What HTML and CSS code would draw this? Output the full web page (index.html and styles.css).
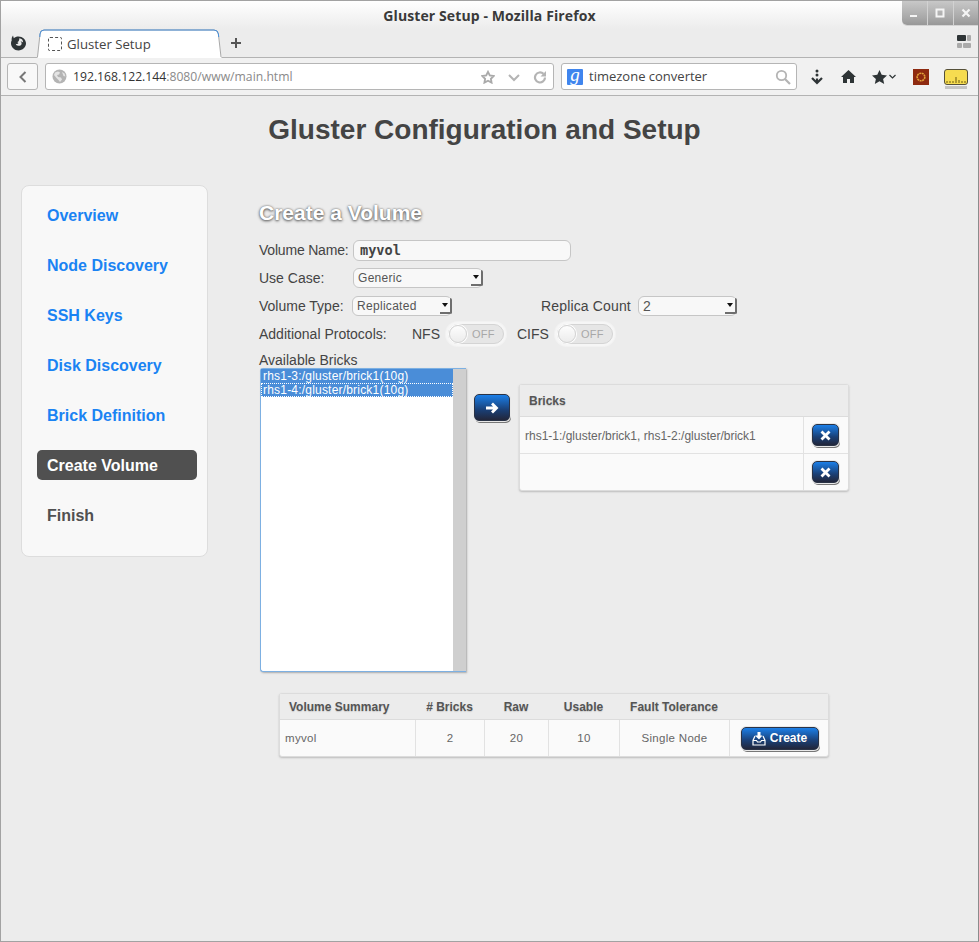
FILE: index.html
```html
<!DOCTYPE html>
<html lang="en">

<head>
    <meta charset="UTF-8">
    <meta name="viewport" content="width=device-width, initial-scale=1.0">
    <title>Gluster Setup</title>
    <link rel="stylesheet" href="styles.css">
</head>

<body>
    <div class="window">
        <!-- browser chrome -->
        <header class="titlebar">
            <span class="title-text">Gluster Setup - Mozilla Firefox</span>
            <div class="win-buttons">
                <span class="win-btn"><svg width="10" height="10" viewBox="0 0 10 10"><rect x="1" y="7" width="7" height="2" fill="#f4f4f4"/></svg></span>
                <span class="win-btn"><svg width="10" height="10" viewBox="0 0 10 10"><rect x="1.5" y="1.5" width="7" height="7" fill="none" stroke="#f4f4f4" stroke-width="2"/></svg></span>
                <span class="win-btn"><svg width="10" height="10" viewBox="0 0 10 10"><path d="M1.5 1.5l7 7M8.500 1.500l-7 7" stroke="#f4f4f4" stroke-width="2.200"/></svg></span>
            </div>
        </header>
        <div class="tabbar">
            <svg class="ff-logo" width="17" height="16" viewBox="0 0 17 16"><path d="M3 .5L3.800 3.200C5 2.100 6.500 1.500 8.500 1.500c4.100 0 7.500 3 7.500 6.800S12.600 15.500 8.500 15.500 1 12.300 1 8.300c0-1.100.2-2 .7-2.900-.3-1.800.2-3.400 1.300-4.900z" fill="#2e3436"/><path d="M9.300 3.200c2.400.1 4 2 3.800 4.300-.7-.9-1.700-1.200-2.700-1 1.100.5 1.500 1.600 1.100 2.700-.5 1.200-1.900 1.900-3.300 1.600-1.200-.2-2.100-1-2.500-2.100 1 .6 2.300.3 2.800-.6-.6-.2-1-.5-1.200-1 1.300-.4 2.200-2 2-3.900z" fill="#ececec"/></svg>
            <div class="tab">
                <svg class="tab-shape" width="185" height="29" viewBox="0 0 185 29"><path d="M0.500 29L3 5Q3.300 1 7 1H177Q181 1 181.400 5L184.500 29" fill="#fff"/><path d="M0.500 28L3 5Q3.300 1 7 1H177Q181 1 181.400 5L184 28" fill="none" stroke="#a9a9a9"/><path d="M2.800 8L3 5Q3.300 1 7 1H177Q181 1 181.400 5L181.700 8" fill="none" stroke="#4a90d9"/></svg>
                <span class="tab-fav"></span>
                <span class="tab-text">Gluster Setup</span>
            </div>
            <svg class="tab-new" width="12" height="12" viewBox="0 0 12 12"><path d="M6 1v10M1 6h10" stroke="#555" stroke-width="2"/></svg>
            <svg class="tab-grid" width="14" height="14" viewBox="0 0 14 14"><rect width="9" height="6" rx="1" fill="#2e3436"/><rect x="10" width="4" height="6" rx="1" fill="#aaa"/><rect y="8" width="5" height="5" rx="1" fill="#aaa"/><rect x="6" y="8" width="8" height="5" rx="1" fill="#aaa"/></svg>
        </div>
        <nav class="navbar">
            <span class="back-btn"><svg width="10" height="12" viewBox="0 0 10 12"><path d="M7.500 1L2.500 6l5 5" fill="none" stroke="#777" stroke-width="2"/></svg></span>
            <div class="urlbar">
                <svg class="globe" width="15" height="15" viewBox="0 0 15 15"><circle cx="7.500" cy="7.500" r="7" fill="#b4b4b4"/><path d="M3 3.500l3-1 2 1-1 2-2 .5 1 2 3 .5 1 2-2 2.500-1.500-2-2-2L2 6zM10 3l2.500 1.500 1 3-2-.5z" fill="#e4e4e4"/></svg>
                <span class="url-text"><b>192.168.122.144</b>:8080/www/main.html</span>
                <svg class="url-icon" width="14" height="14" viewBox="0 0 15 14"><path d="M7.500 1.500l1.900 3.800 4.200.6-3 3 .7 4.100-3.800-2-3.800 2 .7-4.100-3-3 4.200-.6z" fill="none" stroke="#aaa" stroke-width="2"/></svg>
                <svg class="url-icon" width="14" height="14" viewBox="0 0 14 14"><path d="M2 5l5 5 5-5" fill="none" stroke="#b4b4b4" stroke-width="2"/></svg>
                <svg class="url-icon" width="14" height="14" viewBox="0 0 14 14"><path d="M12 7.500a5 5 0 1 1-1.500-3.600" fill="none" stroke="#b4b4b4" stroke-width="2.200"/><path d="M13 1v5.500H7.500z" fill="#b4b4b4"/></svg>
            </div>
            <div class="searchbar">
                <span class="g-icon">g</span>
                <span class="search-text">timezone converter</span>
                <svg width="16" height="16" viewBox="0 0 16 16"><circle cx="6.500" cy="6.500" r="4.700" fill="none" stroke="#b4b4b4" stroke-width="1.800"/><path d="M10 10l5 5" stroke="#b4b4b4" stroke-width="2.200"/></svg>
            </div>
            <div class="nav-icons">
                <svg width="14" height="16" viewBox="0 0 14 16"><circle cx="7" cy="2" r="1.500" fill="#2e3436"/><circle cx="7" cy="6" r="1.500" fill="#2e3436"/><path d="M7 9.500v4M2 9l5 5 5-5" fill="none" stroke="#2e3436" stroke-width="2.200"/></svg>
                <svg width="15" height="13" viewBox="0 0 15 13"><path d="M7.500 0L15 7h-2v6H9V9H6v4H2V7H0z" fill="#2e3436"/></svg>
                <span class="star-menu">
                    <svg width="15" height="14" viewBox="0 0 15 14"><path d="M7.500 0l2.200 4.800 5.300.6-3.900 3.500 1.100 5.100-4.700-2.700L2.800 14l1.100-5.100L0 5.400l5.300-.6z" fill="#2e3436"/></svg>
                    <svg width="7" height="5" viewBox="0 0 7 5"><path d="M.5 1l3 3 3-3" fill="none" stroke="#2e3436" stroke-width="1.200"/></svg>
                </span>
                <svg width="16" height="16" viewBox="0 0 16 16"><rect width="16" height="16" fill="#8e2a10"/><circle cx="8" cy="8" r="3.800" fill="none" stroke="#e2a23a" stroke-width="1.600" stroke-dasharray="2 .6"/></svg>
                <svg class="meter" width="24" height="20" viewBox="0 0 24 20"><rect x=".5" y=".5" width="23" height="15" rx="2.500" fill="#f6dc50" stroke="#55503a"/><path d="M3 14v-2M6 14v-2M9 14v-2M12 14V8M15 14v-3M18 14v-2M21 14v-2" stroke="#6b5a10"/><rect x="1" y="17" width="22" height="3" fill="#c4c4c4"/></svg>
            </div>
        </nav>

        <!-- page -->
        <main class="page">
            <h1 class="page-title">Gluster Configuration and Setup</h1>
            <div class="columns">
                <ul class="steps">
                    <li><a>Overview</a></li>
                    <li><a>Node Discovery</a></li>
                    <li><a>SSH Keys</a></li>
                    <li><a>Disk Discovery</a></li>
                    <li><a>Brick Definition</a></li>
                    <li class="active"><a>Create Volume</a></li>
                    <li class="todo"><a>Finish</a></li>
                </ul>
                <section class="form">
                    <h2 class="form-title">Create a Volume</h2>
                    <div class="row row-name">
                        <label class="lbl lbl-name">Volume Name:</label>
                        <input class="text-input" type="text" value="myvol">
                    </div>
                    <div class="row row-case">
                        <label class="lbl lbl-case">Use Case:</label>
                        <span class="pick pick-case"><select><option>Generic</option></select><i class="pick-arrow"></i></span>
                    </div>
                    <div class="row row-type">
                        <label class="lbl lbl-type">Volume Type:</label>
                        <span class="pick pick-type"><select><option>Replicated</option></select><i class="pick-arrow"></i></span>
                        <label class="lbl lbl-replica">Replica Count</label>
                        <span class="pick pick-replica"><select><option>2</option></select><i class="pick-arrow"></i></span>
                    </div>
                    <div class="row row-proto">
                        <label class="lbl lbl-proto">Additional Protocols:</label>
                        <label class="lbl lbl-nfs">NFS</label>
                        <span class="toggle"><span class="track"><i class="knob"></i>OFF</span></span>
                        <label class="lbl lbl-cifs">CIFS</label>
                        <span class="toggle"><span class="track"><i class="knob"></i>OFF</span></span>
                    </div>
                    <label class="lbl lbl-avail">Available Bricks</label>
                    <div class="bricks-row">
                        <div class="brick-list">
                            <ul class="brick-items">
                                <li>rhs1-3:/gluster/brick1(10g)</li>
                                <li class="focused">rhs1-4:/gluster/brick1(10g)</li>
                            </ul>
                            <div class="scroll-col"></div>
                        </div>
                        <button class="btn btn-arrow"><svg width="14" height="14" viewBox="0 0 14 14"><path d="M1 7h10M7 2.500L11.500 7 7 11.500" fill="none" stroke="#fff" stroke-width="2.800"/></svg></button>
                        <table class="grid bricks-table">
                            <colgroup>
                                <col>
                                <col class="col-action">
                            </colgroup>
                            <thead>
                                <tr><th colspan="2">Bricks</th></tr>
                            </thead>
                            <tbody>
                                <tr>
                                    <td>rhs1-1:/gluster/brick1, rhs1-2:/gluster/brick1</td>
                                    <td class="action"><button class="btn btn-x"><svg width="11" height="11" viewBox="0 0 11 11"><path d="M1.500 1.500l8 8M9.500 1.500l-8 8" stroke="#fff" stroke-width="2.800"/></svg></button></td>
                                </tr>
                                <tr>
                                    <td></td>
                                    <td class="action"><button class="btn btn-x"><svg width="11" height="11" viewBox="0 0 11 11"><path d="M1.500 1.500l8 8M9.500 1.500l-8 8" stroke="#fff" stroke-width="2.800"/></svg></button></td>
                                </tr>
                            </tbody>
                        </table>
                    </div>
                    <table class="grid summary-table">
                        <thead>
                            <tr>
                                <th class="c-name">Volume Summary</th>
                                <th class="c-bricks">#&nbsp;Bricks</th>
                                <th class="c-raw">Raw</th>
                                <th class="c-usable">Usable</th>
                                <th class="c-fault">Fault Tolerance</th>
                                <th class="c-act"></th>
                            </tr>
                        </thead>
                        <tbody>
                            <tr>
                                <td>myvol</td>
                                <td>2</td>
                                <td>20</td>
                                <td>10</td>
                                <td>Single Node</td>
                                <td class="create-cell"><button class="btn btn-create"><svg width="14" height="15" viewBox="0 0 14 15"><path d="M5.500 1h3v3.500h2L7 8.500 3 4.500h2.500z" fill="#fff"/><path d="M3 5L1 9.500V14h12V9.500L11 5M1 9.500h3.500l1 1.500h3l1-1.500H13" fill="none" stroke="#fff" stroke-width="1.200"/></svg>Create</button></td>
                            </tr>
                        </tbody>
                    </table>
                </section>
            </div>
        </main>
    </div>
</body>

</html>
```

FILE: styles.css
```css
* {
    box-sizing: border-box;
}

body {
    margin: 0;
    background: #ececec;
    font-family: "Liberation Sans", Arial, sans-serif;
    color: #444;
}

.window {
    height: 942px;
    border: 1px solid #a2a2a2;
    border-right-color: #8c8c8c;
    display: flex;
    flex-direction: column;
    background: #ececec;
    overflow: hidden;
}

/* title bar */
.titlebar {
    height: 28px;
    flex: none;
    position: relative;
    display: flex;
    align-items: center;
    justify-content: center;
    background: linear-gradient(#fff, #ececec);
}

.title-text {
    font-family: "Open Sans", sans-serif;
    font-size: 14px;
    font-weight: 700;
    letter-spacing: .1px;
    color: #3a3a3a;
}

.win-buttons {
    position: absolute;
    top: 0;
    right: 0;
    display: flex;
    height: 24px;
    border-radius: 0 0 0 5px;
    overflow: hidden;
    background: linear-gradient(#c8c8c8, #a8a8a8 70%, #989898);
    box-shadow: 0 1px 0 #d4d4d4;
}

.win-btn {
    width: 25.500px;
    display: flex;
    align-items: center;
    justify-content: center;
    border-left: 1px solid #d2d2d2;
}

.win-btn:first-child {
    border-left: 0;
}

/* tab strip */
.tabbar {
    height: 29px;
    flex: none;
    display: flex;
    align-items: flex-end;
    background: #ececec;
    border-bottom: 1px solid #b3b3b3;
    padding-left: 9px;
    position: relative;
}

.ff-logo {
    margin-bottom: 6px;
}

.tab {
    width: 185px;
    height: 29px;
    position: relative;
    margin-left: 10px;
    margin-bottom: -1px;
    display: flex;
    align-items: center;
    padding: 1px 0 0 11px;
}

.tab-shape {
    position: absolute;
    left: 0;
    top: 0;
}

.tab-fav {
    position: relative;
    width: 14px;
    height: 14px;
    border: 1px dashed #555;
    border-radius: 2px;
}

.tab-text {
    position: relative;
    margin-left: 5px;
    font-family: "Open Sans", sans-serif;
    font-size: 13.200px;
    color: #444;
}

.tab-new {
    margin: 0 0 8px 8px;
}

.tab-grid {
    margin: 0 7px 8px auto;
}

/* nav bar */
.navbar {
    height: 38px;
    flex: none;
    display: flex;
    align-items: center;
    background: #f1f1f1;
    border-bottom: 1px solid #b3b3b3;
    padding: 0 0 0 6px;
}

.back-btn {
    width: 31px;
    height: 27px;
    flex: none;
    display: flex;
    align-items: center;
    justify-content: center;
    background: #f8f8f8;
    border: 1px solid #b5b5b5;
    border-radius: 3px;
}

.urlbar {
    width: 509px;
    height: 27px;
    flex: none;
    margin-left: 7px;
    display: flex;
    align-items: center;
    background: #fff;
    border: 1px solid #b5b5b5;
    border-radius: 3px;
    padding: 0 6px 0 6px;
}

.url-text {
    flex: 1;
    margin-left: 6px;
    font-family: "Open Sans", sans-serif;
    font-size: 12.200px;
    color: #8a8a8a;
}

.url-text b {
    font-weight: 400;
    color: #333;
}

.url-icon {
    margin-left: 12px;
}

.searchbar {
    width: 236px;
    height: 27px;
    flex: none;
    margin-left: 7px;
    display: flex;
    align-items: center;
    background: #fff;
    border: 1px solid #b5b5b5;
    border-radius: 3px;
    padding: 0 5px 0 5px;
}

.g-icon {
    width: 16px;
    height: 16px;
    flex: none;
    background: #3f85ee;
    color: #fff;
    border-radius: 1px;
    font-family: "Liberation Serif", serif;
    font-size: 19px;
    font-style: italic;
    line-height: 12px;
    text-align: center;
}

.search-text {
    flex: 1;
    margin: 0 0 1px 6px;
    font-family: "Open Sans", sans-serif;
    font-size: 13px;
    color: #444;
}

.nav-icons {
    flex: 1;
    display: flex;
    align-items: center;
    padding-left: 13px;
}

.nav-icons > svg:nth-child(2) {
    margin-left: 17px;
}

.star-menu {
    display: flex;
    align-items: center;
    gap: 2px;
    margin-left: 16px;
}

.nav-icons > svg:nth-child(4) {
    margin-left: 17px;
}

.nav-icons > svg:nth-child(5) {
    margin-left: 15px;
    margin-top: 4px;
}

/* page */
.page {
    flex: 1;
    padding: 0 10px 0 20px;
}

.page-title {
    margin: 16px 0 0;
    height: 36px;
    line-height: 36px;
    font-size: 28px;
    font-weight: 700;
    text-align: center;
    color: #444;
    padding-right: 20px;
}

.columns {
    display: flex;
    margin-top: 37px;
}

/* side menu */
.steps {
    width: 187px;
    height: 372px;
    flex: none;
    margin: 0;
    padding: 14px 10px 0 15px;
    list-style: none;
    background: #f8f8f8;
    border: 1px solid #ddd;
    border-radius: 8px;
}

.steps li {
    height: 30px;
    margin-bottom: 20px;
    padding-left: 10px;
    border-radius: 5px;
    line-height: 31px;
    font-size: 16px;
    font-weight: 700;
    color: #1a83f3;
}

.steps li.active {
    background: #505050;
    color: #fff;
}

.steps li.todo {
    color: #505050;
}

/* form */
.form {
    margin-left: 51px;
    flex: 1;
    font-size: 14px;
}

.form-title {
    margin: 15px 0 0;
    height: 26px;
    line-height: 26px;
    font-size: 21px;
    font-weight: 700;
    color: #fff;
    text-shadow: 0 1px 3px #555, 0 0 2px #777;
}

.row {
    display: flex;
    align-items: center;
}

.row-name {
    height: 22px;
    margin-top: 13px;
}

.row-case {
    height: 20px;
    margin-top: 7px;
}

.row-type {
    height: 20px;
    margin-top: 8px;
}

.row-proto {
    height: 24px;
    margin-top: 6px;
}

.lbl {
    color: #444;
    white-space: nowrap;
}

.lbl-name,
.lbl-case {
    width: 94px;
}

.lbl-name {
    letter-spacing: -.2px;
}

.lbl-type {
    width: 93px;
}

.lbl-replica {
    width: 97px;
    margin-left: 89px;
    letter-spacing: .15px;
}

.lbl-proto {
    width: 153px;
}

.lbl-nfs {
    width: 34px;
}

.lbl-cifs {
    margin-left: 11px;
    width: 38px;
}

.lbl-avail {
    display: block;
    height: 16px;
    line-height: 16px;
    margin-top: 6px;
}

.text-input {
    width: 218px;
    height: 21px;
    padding: 0 6px;
    background: #f8f8f8;
    border: 1px solid #c6c6c6;
    border-radius: 6px;
    font-family: "DejaVu Sans Mono", monospace;
    font-size: 13.600px;
    font-weight: 700;
    color: #444;
}

.pick {
    position: relative;
    display: block;
    height: 20px;
}

.pick-case {
    width: 130px;
}

.pick-type {
    width: 100px;
}

.pick-replica {
    width: 99px;
}

.pick select {
    appearance: none;
    width: 100%;
    height: 100%;
    padding: 0 4px;
    background: #f8f8f8;
    border: 1px solid #c6c6c6;
    border-radius: 6px;
    font-family: "Liberation Sans", Arial, sans-serif;
    font-size: 12px;
    letter-spacing: .3px;
    color: #555;
}

.pick-replica select {
    font-size: 14px;
}

.pick-arrow {
    position: absolute;
    top: 2px;
    right: 0;
    width: 12px;
    height: 16px;
    background: #f8f8f8;
    border-right: 2px solid #6e6e6e;
    border-bottom: 2px solid #6e6e6e;
    border-radius: 0 2px 2px 0;
}

.pick-arrow::after {
    content: "";
    position: absolute;
    left: 2px;
    top: 5px;
    border: 3.500px solid transparent;
    border-top: 4px solid #111;
    border-bottom: 0;
}

.toggle {
    width: 60px;
    height: 24px;
    flex: none;
    padding: 2px;
    background: #f6f6f6;
    border-radius: 12px;
    box-shadow: 0 0 0 1px #f2f2f2;
}

.track {
    display: flex;
    align-items: center;
    height: 20px;
    border-radius: 10px;
    border: 1px solid #d4d4d4;
    background: #e6e6e6;
    font-size: 11px;
    letter-spacing: .2px;
    color: #a8a8a8;
}

.knob {
    width: 18px;
    height: 18px;
    margin-right: 5px;
    border-radius: 50%;
    background: linear-gradient(#fdfdfd, #ececec);
    border: 1px solid #d4d4d4;
    box-shadow: 0 0 0 1px #fff;
}

.bricks-row {
    display: flex;
    align-items: flex-start;
}

.brick-list {
    width: 206px;
    height: 304px;
    margin-left: 1px;
    flex: none;
    display: flex;
    background: #fff;
    border: 1px solid #7db0e2;
    border-right: 0;
    border-radius: 3px 0 0 3px;
    box-shadow: 1px 1px 2px #aaa;
}

.brick-items {
    flex: 1;
    margin: 0;
    padding: 0;
    list-style: none;
    font-size: 12px;
    letter-spacing: .2px;
}

.brick-items li {
    height: 14px;
    line-height: 15px;
    padding-left: 2px;
    background: #4a8dd8;
    color: #fff;
}

.brick-items li.focused {
    outline: 1px dotted #fff;
    outline-offset: -1px;
}

.scroll-col {
    width: 13px;
    background: #cfcfcf;
}

.btn {
    display: flex;
    align-items: center;
    justify-content: center;
    padding: 0;
    border: 1px solid #2a3346;
    border-radius: 5px;
    background: linear-gradient(#1b7fe8, #1a3f75 60%, #22263a);
    box-shadow: 0 0 0 1px #e8e8e8, 1px 2px 0 #777;
    color: #fff;
}

.btn-arrow {
    width: 36px;
    height: 27px;
    flex: none;
    margin: 26px 0 0 8px;
}

.btn-x {
    width: 27px;
    height: 22px;
    margin: 0 auto;
}

.btn-create {
    width: 78px;
    height: 23px;
    gap: 4px;
    font-family: "Liberation Sans", Arial, sans-serif;
    font-size: 12px;
    font-weight: 700;
    margin: 0 auto;
}

/* tables */
.grid {
    border-collapse: separate;
    border-spacing: 0;
    background: #fafafa;
    border: 1px solid #dcdcdc;
    border-radius: 3px;
    box-shadow: 0 1px 2px #bbb;
    table-layout: fixed;
    color: #666;
    font-size: 12px;
}

.grid th {
    background: #ececec;
    border-bottom: 1px solid #dcdcdc;
    font-weight: 700;
    text-align: left;
    color: #555;
    text-shadow: 0 1px 1px #ccc;
}

.grid td {
    border-bottom: 1px solid #e2e2e2;
    border-left: 1px solid #e2e2e2;
}

.grid td:first-child {
    border-left: 0;
}

.grid tr:last-child td {
    border-bottom: 0;
}

.bricks-table {
    width: 330px;
    flex: none;
    margin: 16px 0 0 9px;
}

.col-action {
    width: 45px;
}

.bricks-table th {
    height: 32px;
    padding-left: 9px;
}

.bricks-table td {
    height: 37px;
    padding: 1px 0 0 5px;
}

.bricks-table tr:last-child td {
    height: 36px;
}

.bricks-table td.action {
    padding: 0;
}

.summary-table {
    width: 550px;
    margin: 21px 0 0 20px;
}

.summary-table th {
    height: 26px;
    text-align: center;
}

.summary-table th.c-name {
    text-align: left;
    padding-left: 9px;
    width: 135px;
}

.c-bricks {
    width: 69px;
}

.c-raw {
    width: 64px;
}

.c-usable {
    width: 71px;
}

.c-fault {
    width: 110px;
}

.summary-table td {
    height: 36px;
    text-align: center;
    font-size: 11.500px;
    letter-spacing: .3px;
}

.summary-table td:first-child {
    text-align: left;
    padding-left: 5px;
}

.summary-table td.create-cell {
    padding-left: 2px;
}
```
